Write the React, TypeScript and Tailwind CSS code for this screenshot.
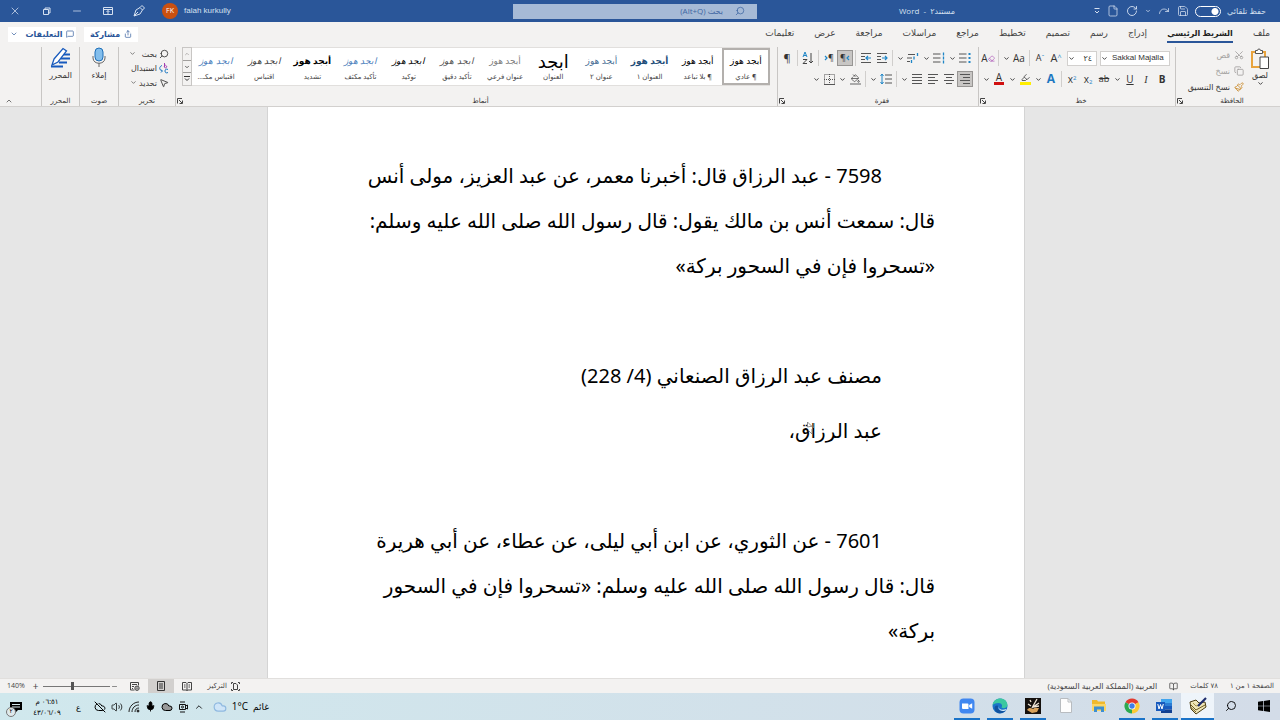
import type { ReactNode } from 'react';
import {
  Mic, Search, Scissors, Copy, Paintbrush, ChevronDown, ChevronUp, Save, Redo, RotateCw, File,
  Minus, X, Share, MessageSquare, MousePointer2, BookOpen, Cloud, Volume2,
  CloudOff, PaintBucket, Highlighter, Eraser,
} from 'lucide-react';

const tabs = ['ملف', 'الشريط الرئيسي', 'إدراج', 'رسم', 'تصميم', 'تخطيط', 'مراجع', 'مراسلات', 'مراجعة', 'عرض', 'تعليمات'];

const styles = [
  { sample: 'أبجد هوز', name: '¶ عادي', look: 'text-black' },
  { sample: 'أبجد هوز', name: '¶ بلا تباعد', look: 'text-black' },
  { sample: 'أبجد هوز', name: 'العنوان ١', look: 'text-[#1f4e79] font-bold' },
  { sample: 'أبجد هوز', name: 'عنوان ٢', look: 'text-[#4a6f96]' },
  { sample: 'ابجد', name: 'العنوان', look: 'text-black text-[18px]' },
  { sample: 'أبجد هوز', name: 'عنوان فرعي', look: 'text-[#808080]' },
  { sample: 'ابجد هوز', name: 'تأكيد دقيق', look: 'text-[#505050] italic' },
  { sample: 'ابجد هوز', name: 'توكيد', look: 'text-black italic' },
  { sample: 'ابجد هوز', name: 'تأكيد مكثف', look: 'text-[#4a7ebb] italic' },
  { sample: 'أبجد هوز', name: 'تشديد', look: 'text-black font-bold' },
  { sample: 'ابجد هوز', name: 'اقتباس', look: 'text-[#404040] italic' },
  { sample: 'ابجد هوز', name: 'اقتباس مكـ...', look: 'text-[#4a7ebb] italic' },
];

function Chevron() {
  return (
    <button aria-label="المزيد" className="flex h-4 w-[10px] items-center justify-center">
      <ChevronDown size={7} strokeWidth={3} />
    </button>
  );
}

function Sep() {
  return <span className="mx-[2px] h-4 w-px bg-[#d0cecc]" />;
}

function Tool({ label, active, children }: { label: string; active?: boolean; children: ReactNode }) {
  return (
    <button
      aria-label={label}
      dir="ltr"
      className={`flex h-4 w-4 items-center justify-center ${active ? 'border border-[#979593] bg-[#c8c6c4]' : ''}`}
    >
      {children}
    </button>
  );
}

function Lines({ widths, align = 'end' }: { widths: number[]; align?: 'start' | 'center' | 'end' }) {
  return (
    <svg width="12" height="12" viewBox="0 0 12 12" stroke="#555" strokeWidth="1">
      {widths.map((w, i) => {
        const x = align === 'start' ? 1 : align === 'center' ? 6 - w / 2 : 11 - w;
        return <path key={i} d={`M${x} ${i * 3 + 1.5}h${w}`} />;
      })}
    </svg>
  );
}

function ListIcon({ kind }: { kind: 'bullets' | 'numbers' | 'levels' }) {
  return (
    <svg width="12" height="12" viewBox="0 0 12 12" fill="none">
      {kind === 'levels' ? (
        <>
          <path d="M1 2.500h7M0 6h5M0 9.500h3" stroke="#555" />
          <path d="M10.500 1v3M7 4.500v3M4.500 8v3" stroke="#1f86c7" strokeWidth="1.300" />
        </>
      ) : (
        <>
          <path d="M0 2h7.500M0 6h7.500M0 10h7.500" stroke="#555" />
          {kind === 'bullets' ? (
            <path d="M9.500 1h2v2h-2zM9.500 5h2v2h-2zM9.500 9h2v2h-2z" fill="#1f86c7" />
          ) : (
            <path d="M10.500 .5v3M10.500 4.500v3M10.500 8.500v3" stroke="#1f86c7" strokeWidth="1.300" />
          )}
        </>
      )}
    </svg>
  );
}

function IndentIcon({ d }: { d: string }) {
  return (
    <svg width="12" height="12" viewBox="0 0 12 12" fill="none">
      <path d="M1 1.500h10M1 10.500h10M1 4.500h4M1 7.500h4" stroke="#555" />
      <path d={d} stroke="#1f86c7" strokeWidth="1.200" />
    </svg>
  );
}

function DirectionArrow({ d }: { d: string }) {
  return (
    <svg width="4" height="6" viewBox="0 0 4 6" fill="none" stroke="#1f86c7" strokeWidth="1.200">
      <path d={d} />
    </svg>
  );
}

function Launcher() {
  return (
    <button aria-label="خيارات" className="flex h-2 w-2 items-center justify-center">
      <svg width="6" height="6" viewBox="0 0 6 6" fill="none" stroke="#444">
        <path d="M.5 5.500V.5H5M2 2l3 3M5.500 2.500v3h-3" />
      </svg>
    </button>
  );
}

function Group({ label, width, launcher, children }: { label: string; width: string; launcher?: boolean; children: ReactNode }) {
  return (
    <section className={`flex flex-col border-e border-[#c8c6c4] ${width}`}>
      <div className="h-[50px]">{children}</div>
      <div className="flex h-2 items-center text-[7px] leading-[8px]">
        <span className="flex-1 text-center">{label}</span>
        {launcher && <Launcher />}
      </div>
    </section>
  );
}

function TitleBar() {
  return (
    <header className="grid h-[22px] shrink-0 grid-cols-[325fr_198fr_244fr_513fr] items-center bg-[#2a5699] text-[8px] text-[#d5e0f0]">
      <div className="flex items-center gap-[6px] ps-[14px]">
        <label htmlFor="autosave">حفظ تلقائي</label>
        <input
          id="autosave"
          type="checkbox"
          className="h-[11px] w-[26px] appearance-none rounded-full border border-white bg-[radial-gradient(circle_at_19px_50%,white_3px,transparent_4px)]"
        />
        <div className="flex items-center gap-[7px]">
          <button aria-label="حفظ"><Save size={12} strokeWidth={1.5} /></button>
          <button aria-label="إعادة"><Redo size={12} strokeWidth={1.5} /></button>
          <button aria-label="المزيد"><ChevronDown size={6} strokeWidth={3} /></button>
          <button aria-label="تكرار"><RotateCw size={12} strokeWidth={1.8} /></button>
          <button aria-label="جديد"><File size={12} strokeWidth={1.5} /></button>
          <button aria-label="تخصيص">
            <svg width="6" height="6" viewBox="0 0 6 6" fill="none" stroke="currentColor">
              <path d="M.5 .5h5M1 3l2 2 2-2" />
            </svg>
          </button>
        </div>
      </div>
      <h1>مستند٢ &nbsp;-&nbsp; Word</h1>
      <div className="flex h-[15px] items-center gap-3 bg-[#a6bad6] px-3 text-[#2a5699]">
        <Search size={10} strokeWidth={1.5} className="-scale-x-100" />
        <input
          aria-label="بحث"
          placeholder="بحث (Alt+Q)"
          className="min-w-0 flex-1 bg-transparent text-[8px] outline-none placeholder:text-[#3f66a3]"
        />
      </div>
      <div className="flex items-center justify-end pe-[9px]">
        <span className="me-[6px] font-['Liberation_Sans',sans-serif]">falah kurkully</span>
        <span className="flex h-4 w-4 items-center justify-center rounded-full bg-[#ca5010] text-[7px] text-white">FK</span>
        <div className="ms-[17px] flex items-center gap-[19px]">
          <button aria-label="قلم">
            <svg width="12" height="12" viewBox="0 0 12 12" fill="none" stroke="currentColor">
              <path d="M1 11l2-6 4-2.500L9.500 5 7 9zM1 11l4-4M7 2.500L9 .5 11.500 3l-2 2" />
            </svg>
          </button>
          <button aria-label="عرض الشريط">
            <svg width="12" height="12" viewBox="0 0 12 12" fill="none" stroke="currentColor">
              <path d="M1.500 2.500h9v7h-9zM1.500 4.500h9M6 9V5.500M4.500 7L6 5.500 7.500 7" />
            </svg>
          </button>
          <button aria-label="تصغير"><Minus size={12} strokeWidth={1.5} /></button>
          <button aria-label="استعادة">
            <svg width="12" height="12" viewBox="0 0 12 12" fill="none" stroke="currentColor">
              <path d="M3.500 4.500h5v5h-5zM5 4.500V3h5v5H8.500" />
            </svg>
          </button>
          <button aria-label="إغلاق"><X size={12} strokeWidth={1.5} /></button>
        </div>
      </div>
    </header>
  );
}

function Tabs() {
  return (
    <nav className="flex h-[24px] shrink-0 items-center justify-between ps-[10px] pe-2">
      <div className="flex items-center gap-5">
        {tabs.map((tab, i) => (
          <button
            key={tab}
            className={`h-[18px] border-b-2 leading-[14px] ${i === 1 ? 'border-[#2a5699] text-[8px] font-bold text-[#222]' : 'border-transparent text-[9px] text-[#444]'}`}
          >
            {tab}
          </button>
        ))}
      </div>
      <div className="flex gap-2 text-[8px] font-bold text-[#2a5699]">
        <button className="flex h-[15px] w-[54px] items-center justify-center gap-1 bg-white">
          <Share size={8} />
          مشاركة
        </button>
        <button className="flex h-[15px] w-[68px] items-center justify-center gap-1 bg-white">
          <MessageSquare size={8} />
          التعليقات
          <ChevronDown size={8} className="ms-1" />
        </button>
      </div>
    </nav>
  );
}

function ClipboardGroup() {
  return (
    <Group label="الحافظة" width="w-[105px]" launcher>
      <div className="flex gap-1 ps-2">
        <button className="flex w-6 flex-col items-center pt-px text-[8px] leading-[10px]">
          <svg width="20" height="22" viewBox="0 0 20 22" fill="none">
            <path d="M2 4h13v15H2z" stroke="#e8a33d" strokeWidth="2" />
            <path d="M5.500 5.500v-3h2a1.500 1.500 0 013 0h2v3z" fill="#fff" stroke="#555" />
            <path d="M10 9h8.500v11.500H10z" fill="#fff" stroke="#444" />
          </svg>
          <span>لصق</span>
          <ChevronDown size={7} strokeWidth={3} />
        </button>
        <div className="flex flex-col text-[8px]">
          <button className="flex h-4 items-center gap-1 text-[#a19f9d]"><Scissors size={10} className="-rotate-90" />قص</button>
          <button className="flex h-4 items-center gap-1 text-[#a19f9d]"><Copy size={10} />نسخ</button>
          <button className="flex h-4 items-center gap-1 whitespace-nowrap"><Paintbrush size={10} className="text-[#c98a2b]" />نسخ التنسيق</button>
        </div>
      </div>
    </Group>
  );
}

function FontGroup() {
  return (
    <Group label="خط" width="w-[197px]" launcher>
      <div className="flex flex-col gap-[5px] ps-[5px] pt-[3px]">
        <div className="flex h-4 items-center">
          <div className="flex h-[15px] w-[70px] items-center border border-[#d2d0ce] bg-white">
            <select aria-label="الخط" dir="ltr" className="h-full min-w-0 flex-1 appearance-none ps-1 font-['Liberation_Sans',sans-serif] text-[8px] outline-none">
              <option>Sakkal Majalla</option>
            </select>
            <ChevronDown size={7} strokeWidth={3} />
          </div>
          <div className="mx-[3px] flex h-[15px] w-[30px] items-center border border-[#d2d0ce] bg-white">
            <select aria-label="حجم الخط" className="h-full min-w-0 flex-1 appearance-none ps-1 text-[8px] outline-none">
              <option>٢٤</option>
            </select>
            <ChevronDown size={7} strokeWidth={3} />
          </div>
          <Tool label="تكبير الخط"><span className="text-[11px]">A</span><span className="text-[7px] text-[#1f86c7]">^</span></Tool>
          <Tool label="تصغير الخط"><span className="text-[9px]">A</span><span className="text-[7px] text-[#1f86c7]">ˇ</span></Tool>
          <Sep />
          <Tool label="تغيير حالة الأحرف"><span className="text-[10px]">Aa</span></Tool>
          <Chevron />
          <Sep />
          <Tool label="مسح التنسيق"><span className="text-[10px]">A</span><Eraser size={7} className="text-[#a33fb0]" /></Tool>
        </div>
        <div className="flex h-4 items-center text-[10px]">
          <Tool label="غامق"><b>B</b></Tool>
          <Tool label="مائل"><i className="font-['Liberation_Serif',serif]">I</i></Tool>
          <Tool label="تسطير"><u>U</u></Tool>
          <Chevron />
          <Tool label="يتوسطه خط"><s className="text-[9px]">ab</s></Tool>
          <Tool label="منخفض"><span>x<sub className="text-[6px] text-[#1f86c7]">2</sub></span></Tool>
          <Tool label="مرتفع"><span>x<sup className="text-[6px] text-[#1f86c7]">2</sup></span></Tool>
          <Sep />
          <Tool label="تأثيرات النص"><b className="text-[12px] text-[#1f78c1]">A</b></Tool>
          <Chevron />
          <Tool label="لون التمييز"><span className="border-b-[3px] border-[#ffee00] px-px"><Highlighter size={9} /></span></Tool>
          <Chevron />
          <Tool label="لون الخط"><span className="border-b-[3px] border-[#d01010] px-[2px] leading-[9px]">A</span></Tool>
          <Chevron />
        </div>
      </div>
    </Group>
  );
}

function ParagraphGroup() {
  return (
    <Group label="فقرة" width="w-[201px]" launcher>
      <div className="flex flex-col gap-[5px] ps-[5px] pt-[3px]">
        <div className="flex h-4 items-center">
          <Tool label="تعداد نقطي"><ListIcon kind="bullets" /></Tool>
          <Chevron />
          <Tool label="تعداد رقمي"><ListIcon kind="numbers" /></Tool>
          <Chevron />
          <Tool label="قائمة متعددة"><ListIcon kind="levels" /></Tool>
          <Chevron />
          <Sep />
          <Tool label="إنقاص المسافة"><IndentIcon d="M6 6h5M9 4l2 2-2 2" /></Tool>
          <Tool label="زيادة المسافة"><IndentIcon d="M11 6H6M8 4L6 6l2 2" /></Tool>
          <Sep />
          <Tool label="من اليمين إلى اليسار" active><span className="text-[9px]">¶</span><DirectionArrow d="M3 1L1 3l2 2" /></Tool>
          <Tool label="من اليسار إلى اليمين"><DirectionArrow d="M1 1l2 2-2 2" /><span className="text-[9px]">¶</span></Tool>
          <Sep />
          <Tool label="فرز">
            <svg width="12" height="14" viewBox="0 0 12 14" fill="none">
              <path d="M1 6l2-5 2 5M2 4.500h2" stroke="#1f86c7" />
              <path d="M1 8.500h4l-4 4h4M9 2v10M7 10l2 2 2-2" stroke="#444" />
            </svg>
          </Tool>
          <Sep />
          <Tool label="إظهار الكل"><span className="text-[11px]">¶</span></Tool>
        </div>
        <div className="flex h-4 items-center">
          <Tool label="محاذاة إلى اليمين" active><Lines widths={[10, 7, 10, 7]} /></Tool>
          <Tool label="توسيط"><Lines widths={[10, 6, 10, 6]} align="center" /></Tool>
          <Tool label="محاذاة إلى اليسار"><Lines widths={[10, 7, 10, 7]} align="start" /></Tool>
          <Tool label="ضبط"><Lines widths={[10, 10, 10, 10]} /></Tool>
          <Chevron />
          <Sep />
          <Tool label="تباعد الأسطر">
            <svg width="12" height="12" viewBox="0 0 12 12" fill="none">
              <path d="M5 2h7M5 6h7M5 10h7" stroke="#555" />
              <path d="M2 1v10M.5 3L2 1l1.500 2M.5 9L2 11l1.500-2" stroke="#1f86c7" />
            </svg>
          </Tool>
          <Chevron />
          <Sep />
          <Tool label="تظليل"><PaintBucket size={11} strokeWidth={1.8} className="border-b-2 border-[#aaa]" /></Tool>
          <Chevron />
          <Tool label="حدود">
            <svg width="11" height="11" viewBox="0 0 11 11" fill="none" stroke="#555">
              <path d="M.5 .5h10v10H.5zM5.500 0v11M0 5.500h11" strokeDasharray="1 1" />
              <path d="M0 10.500h11" />
            </svg>
          </Tool>
          <Chevron />
        </div>
      </div>
    </Group>
  );
}

function StylesGroup() {
  return (
    <Group label="أنماط" width="min-w-0 flex-1" launcher>
      <div className="flex h-[39px] ps-[7px] pe-[6px]">
        <div className="flex min-w-0 flex-1 overflow-hidden border-y border-[#e1dfdd] bg-white">
          {styles.map((style, i) => (
            <button
              key={style.name}
              className={`flex min-w-0 flex-1 flex-col items-center overflow-hidden border-2 pt-px whitespace-nowrap ${i === 0 ? 'border-[#b3b0ad]' : 'border-transparent'}`}
            >
              <span className={`flex h-5 items-center text-[9px] ${style.look}`}>{style.sample}</span>
              <span className="text-[7px] leading-[12px] text-[#444]">{style.name}</span>
            </button>
          ))}
        </div>
        <div className="flex w-[10px] flex-col border border-[#c8c6c4]">
          <button aria-label="أعلى" className="flex flex-1 items-center justify-center text-[#a19f9d]"><ChevronUp size={6} strokeWidth={3} /></button>
          <button aria-label="أسفل" className="flex flex-1 items-center justify-center border-y border-[#a19f9d]"><ChevronDown size={6} strokeWidth={3} /></button>
          <button aria-label="المزيد" className="flex flex-1 items-center justify-center">
            <svg width="6" height="6" viewBox="0 0 6 6" fill="none" stroke="#333"><path d="M0 .5h6M1 2.500l2 2 2-2" /></svg>
          </button>
        </div>
      </div>
    </Group>
  );
}

function Ribbon() {
  return (
    <div className="flex h-[61px] shrink-0 border-b border-[#d2d0ce] pt-px">
      <ClipboardGroup />
      <FontGroup />
      <ParagraphGroup />
      <StylesGroup />
      <Group label="تحرير" width="w-[57px]">
        <div className="flex flex-col ps-[6px] text-[8px]">
          <button className="flex h-[13px] items-center gap-[2px]"><Search size={10} className="-scale-x-100" />بحث<ChevronDown size={7} className="ms-1" /></button>
          <button className="flex h-4 items-center gap-[2px] whitespace-nowrap">
            <svg width="10" height="11" viewBox="0 0 10 11" fill="none">
              <path d="M5.500 0v4M5.500 3a1.200 1.200 0 102 0 1.200 1.200 0 00-2 0" stroke="#a33fb0" />
              <path d="M3 2.500C0 3.500 0 7 3 8M2 6.500L3.500 8 2 9.500M9 6.500c-2-1-3 0-3 1.500s1 2.500 3 1.500" stroke="#1f78c1" />
            </svg>
            استبدال
          </button>
          <button className="flex h-[13px] items-center gap-[2px]"><MousePointer2 size={10} />تحديد<ChevronDown size={7} /></button>
        </div>
      </Group>
      <Group label="صوت" width="w-[39px]">
        <button className="flex w-full flex-col items-center gap-px text-[8px]">
          <svg width="14" height="21" viewBox="0 0 14 21" fill="none">
            <rect x="3" y="1" width="8" height="13" rx="4" fill="#83beec" stroke="#1e6fb8" />
            <path d="M1 9v2c0 7 12 7 12 0V9M7 16v4" stroke="#666" />
          </svg>
          إملاء
        </button>
      </Group>
      <Group label="المحرر" width="w-[38px]">
        <button className="flex w-full flex-col items-center gap-px text-[8px]">
          <svg width="22" height="21" viewBox="0 0 22 21" fill="none">
            <path d="M13 7.500h7M11 11.500h9M9 15.500h8M1 19.500h12" stroke="#185abd" strokeWidth="2.200" />
            <path d="M4 12L13 1.500 16.500 4 8 15l-6 3z" fill="#fff" stroke="#185abd" strokeWidth="1.300" />
          </svg>
          المحرر
        </button>
      </Group>
      <div className="flex w-[41px] items-end justify-end pe-[5px] pb-px">
        <button aria-label="طي الشريط"><ChevronUp size={8} /></button>
      </div>
    </div>
  );
}

function Document() {
  return (
    <main className="flex min-h-0 flex-1 justify-center overflow-hidden bg-[#e6e6e6] pe-3">
      <article className="flex w-[758px] flex-col border-x border-[#d4d4d4] bg-white px-[89px] pt-[46px] font-['Noto_Sans','DejaVu_Sans',sans-serif] text-[20px] leading-[45px] whitespace-nowrap text-black">
        <p className="indent-[53px]">
          7598 - عبد الرزاق قال: أخبرنا معمر، عن عبد العزيز، مولى أنس
          <br />
          قال: سمعت أنس بن مالك يقول: قال رسول الله صلى الله عليه وسلم:
          <br />
          «تسحروا فإن في السحور بركة»
        </p>
        <p className="mt-[65px] indent-[53px]">مصنف عبد الرزاق الصنعاني (4/ 228)</p>
        <p className="relative mt-[10px] indent-[53px]">
          عبد الرزاق،
          {/* text pointer resting on the word */}
          <svg className="absolute top-[13px] right-[120px]" width="9" height="15" viewBox="0 0 9 15" fill="none" stroke="#777">
            <path d="M1.500 1v5l5-1M1.500 1l6 6V2M2 9l4 4V8" strokeWidth=".8" />
          </svg>
        </p>
        <p className="mt-[65px] indent-[53px]">
          7601 - عن الثوري، عن ابن أبي ليلى، عن عطاء، عن أبي هريرة
          <br />
          قال: قال رسول الله صلى الله عليه وسلم: «تسحروا فإن في السحور
          <br />
          بركة»
        </p>
      </article>
    </main>
  );
}

function StatusBar() {
  return (
    <footer className="flex h-[15px] shrink-0 items-center justify-between border-t border-[#e1dfdd] bg-[#f3f2f1] ps-[6px] pe-[7px] text-[7px] text-[#444]">
      <div className="flex items-center gap-3">
        <span>الصفحة ١ من ١</span>
        <span>٧٨ كلمات</span>
        <BookOpen size={9} />
        <span className="text-[8px]">العربية (المملكة العربية السعودية)</span>
      </div>
      <div className="flex h-full items-center">
        <button className="me-2 flex items-center gap-1">
          <svg width="9" height="9" viewBox="0 0 9 9" fill="none" stroke="#444">
            <path d="M2 .5H.5V2M7 .5h1.500V2M.5 7v1.500H2M8.500 7v1.500H7M2.500 1.500h2.500l1.500 1.500v4.500h-4z" />
          </svg>
          التركيز
        </button>
        <button aria-label="وضع القراءة" className="flex h-full w-[26px] items-center justify-center">
          <svg width="10" height="9" viewBox="0 0 10 9" fill="none" stroke="#444">
            <path d="M5 1.500v7M5 1.500L4 .5H.5V8H4l1 .5L6 8h3.500V.5H6zM2 3h1.500M2 5h1.500M6.500 3H8M6.500 5H8" />
          </svg>
        </button>
        <button aria-label="تخطيط الطباعة" className="flex h-full w-[26px] items-center justify-center bg-[#d2d0ce]">
          <svg width="8" height="10" viewBox="0 0 8 10" fill="none" stroke="#333"><path d="M.5 .5h7v9h-7zM2 3h4M2 5h4M2 7h4" /></svg>
        </button>
        <button aria-label="تخطيط ويب" className="flex h-full w-[26px] items-center justify-center">
          <svg width="10" height="9" viewBox="0 0 10 9" fill="none" stroke="#444">
            <path d="M4.500 8H.5V.5h8v3M2 2.500h5M2 4.500h2M2 6.500h1" />
            <circle cx="7" cy="6.200" r="2.200" /><path d="M5 6.200h4M7 4v4.500" strokeWidth=".6" />
          </svg>
        </button>
        <button aria-label="تصغير" className="ms-1 me-px"><Minus size={7} /></button>
        <input
          aria-label="تكبير/تصغير"
          type="range"
          defaultValue={55}
          className="h-3 w-[67px] appearance-none bg-[linear-gradient(#777,#777)] bg-[length:100%_1px] bg-center bg-no-repeat [&::-webkit-slider-thumb]:h-2 [&::-webkit-slider-thumb]:w-[3px] [&::-webkit-slider-thumb]:appearance-none [&::-webkit-slider-thumb]:bg-[#555]"
        />
        <button aria-label="تكبير" className="ms-1 text-[10px] leading-[10px]">+</button>
        <span className="ms-2">140%</span>
      </div>
    </footer>
  );
}

function TaskButton({ label, open, active, children }: { label: string; open?: boolean; active?: boolean; children: ReactNode }) {
  return (
    <button
      aria-label={label}
      className={`flex h-full w-[33px] flex-col items-center justify-between ${active ? 'bg-[#eef4fa]' : ''}`}
    >
      <span className="flex flex-1 items-center">{children}</span>
      <span className={`h-[2px] ${active ? 'w-full' : 'w-[26px]'} ${open ? 'bg-[#1a73c8]' : ''}`} />
    </button>
  );
}

function Taskbar() {
  return (
    <footer className="flex h-[27px] shrink-0 items-center justify-between bg-linear-to-l from-[#d3dce8] to-[#d0e8ed] pe-[10px] text-black">
      <div className="flex h-full">
        <TaskButton label="ابدأ">
          <svg width="12" height="12" viewBox="0 0 12 12"><path d="M0 1.700L5 1v4.700H0zM5.700 .9L12 0v5.700H5.700zM0 6.300h5V11l-5-.7zM5.700 6.300H12V12l-6.300-.9z" /></svg>
        </TaskButton>
        <TaskButton label="بحث"><Search size={12} strokeWidth={1.8} className="-scale-x-100" /></TaskButton>
        <TaskButton label="المكتبة" open active>
          <svg width="18" height="18" viewBox="0 0 18 18">
            <path d="M1 5l6-2 3 3 6-1 1 5-10 7-5-5z" fill="#efe6b8" stroke="#4c3d12" />
            <path d="M2 8l5 5 9-5M2 10.500l5 4.500" fill="none" stroke="#6d5a1c" />
            <path d="M4 6l3 3 4-1" fill="none" stroke="#a89448" />
            <path d="M17 1L9 9" stroke="#1d2b6b" strokeWidth="2.200" />
          </svg>
        </TaskButton>
        <TaskButton label="Word" open>
          <svg width="17" height="16" viewBox="0 0 17 16">
            <path d="M5 1h11v4H5z" fill="#41a5ee" /><path d="M5 5h11v3H5z" fill="#2b7cd3" />
            <path d="M5 8h11v3.500H5z" fill="#185abd" /><path d="M5 11.500h11V15H5z" fill="#103f91" />
            <path d="M0 4h9v9H0z" fill="#185abd" />
            <path d="M1.800 6l1.200 5 1.500-4.500L6 11l1.300-5" fill="none" stroke="#fff" />
          </svg>
        </TaskButton>
        <TaskButton label="Chrome" open>
          <svg width="16" height="16" viewBox="0 0 16 16">
            <path d="M8 8L1.500 4.200A7.500 7.500 0 0114.500 4.200z" fill="#e33b2e" />
            <path d="M8 8l6.500-3.800A7.500 7.500 0 018 15.500z" fill="#fcc934" />
            <path d="M8 8v7.500A7.500 7.500 0 011.500 4.200z" fill="#2da94f" />
            <circle cx="8" cy="8" r="3.500" fill="#fff" /><circle cx="8" cy="8" r="2.700" fill="#3f7ee8" />
          </svg>
        </TaskButton>
        <TaskButton label="مستكشف الملفات">
          <svg width="16" height="14" viewBox="0 0 16 14">
            <path d="M1 1h5l1 1.500h7V12H1z" fill="#f0b92c" /><path d="M1 5h14v7H1z" fill="#fbd667" />
            <path d="M3 13V7.500h10V13h-3v-2.500H6V13z" fill="#3d8fd0" />
          </svg>
        </TaskButton>
        <TaskButton label="ملف">
          <svg width="12" height="15" viewBox="0 0 12 15"><path d="M.5 .5H8L11.500 4v10.500H.5z" fill="#fdfdfd" stroke="#b8bcc0" /><path d="M8 .5V4h3.500" fill="none" stroke="#b8bcc0" /></svg>
        </TaskButton>
        <TaskButton label="الشاملة" open>
          <svg width="16" height="16" viewBox="0 0 16 16">
            <path d="M0 0h16v16H0z" fill="#15110e" />
            <path d="M2 12c2-3 4-2 6-1 2-2 4-1 6-1l-2 4-5 1z" fill="#d9a35c" />
            <path d="M7 10l5-9M8 9l6-4M8 9l6-1M3 6l3 2M5 2l1 2" stroke="#f0e6d8" strokeWidth="1.300" />
          </svg>
        </TaskButton>
        <TaskButton label="Edge" open>
          <svg width="16" height="16" viewBox="0 0 16 16">
            <circle cx="8" cy="8" r="7.500" fill="#1b74c9" />
            <path d="M.5 7.500C1 -1.500 15-2 15.500 7c0 3-4 4-6 2.500 1.500-2 0-4.500-3-4.500S1 6 .5 7.500z" fill="#3cc8a0" />
            <path d="M6 8c-1 3 2 6.500 7.500 4.500C10 17 3 16 2.500 10 3 7.500 5 7 6 8z" fill="#12529e" />
            <path d="M6.500 7.500c-1 3 3 5.500 8 3.500l-1 1.500C9 14 5.500 11 6.500 7.500z" fill="#e7f1f8" />
          </svg>
        </TaskButton>
        <TaskButton label="Zoom" open>
          <svg width="16" height="16" viewBox="0 0 16 16">
            <rect x=".5" y=".5" width="15" height="15" rx="4" fill="#4087f0" />
            <path d="M3 5.500h5.500a1 1 0 011 1V11H4a1 1 0 01-1-1zM10.200 7l3-1.700v5.400l-3-1.700z" fill="#fff" />
          </svg>
        </TaskButton>
      </div>
      <div className="flex items-center gap-[5px] text-[9px]">
        <span>غائم</span>
        <span className="text-[10px]">1°C</span>
        <Cloud size={14} className="fill-[#cfe5f8] text-[#8fb9e0]" />
        <button aria-label="الرموز المخفية" className="ms-1"><ChevronUp size={10} /></button>
        <svg width="11" height="12" viewBox="0 0 11 12" fill="none" stroke="#111">
          <path d="M1.500 3.500h6v5h-6zM7.500 5l2-1v4l-2-1M2 1h5M2 11h5" /><circle cx="4.500" cy="6" r="1" />
        </svg>
        <Cloud size={12} className="fill-[#999]" />
        <Mic size={11} className="fill-black" />
        <svg width="12" height="12" viewBox="0 0 12 12" fill="none" stroke="#222">
          <path d="M1 11C1 5.500 5.500 1 11 1M4 11c0-4 3-7 7-7M7 11c0-2.500 1.500-4 4-4" /><circle cx="10" cy="10" r="1" fill="#222" />
        </svg>
        <Volume2 size={12} strokeWidth={1.5} />
        <CloudOff size={12} />
        <span className="mx-2 text-[8px]">ع</span>
        <time className="flex w-[32px] flex-col items-center text-[7px] leading-[11px]">
          <span>٠٦:٥١ م</span>
          <span dir="ltr">٤٣/٠٦/٠٩</span>
        </time>
        <button aria-label="الإشعارات" className="relative ms-1">
          <svg width="12" height="12" viewBox="0 0 12 12">
            <path d="M0 1h12v8H8l-3 3V9H0z" />
            <path d="M2 3.500h8M2 6h8" stroke="#d6e8ec" />
          </svg>
          <span className="absolute -bottom-1 -left-1 flex h-[10px] w-[10px] items-center justify-center rounded-full border border-[#777] bg-[#dfe9ec] text-[6px]">٢</span>
        </button>
      </div>
    </footer>
  );
}

export default function App() {
  return (
    <div dir="rtl" lang="ar" className="flex h-screen flex-col overflow-hidden bg-[#f3f2f1] font-['Open_Sans','DejaVu_Sans',sans-serif] text-[#333]">
      <TitleBar />
      <Tabs />
      <Ribbon />
      <Document />
      <StatusBar />
      <Taskbar />
    </div>
  );
}
